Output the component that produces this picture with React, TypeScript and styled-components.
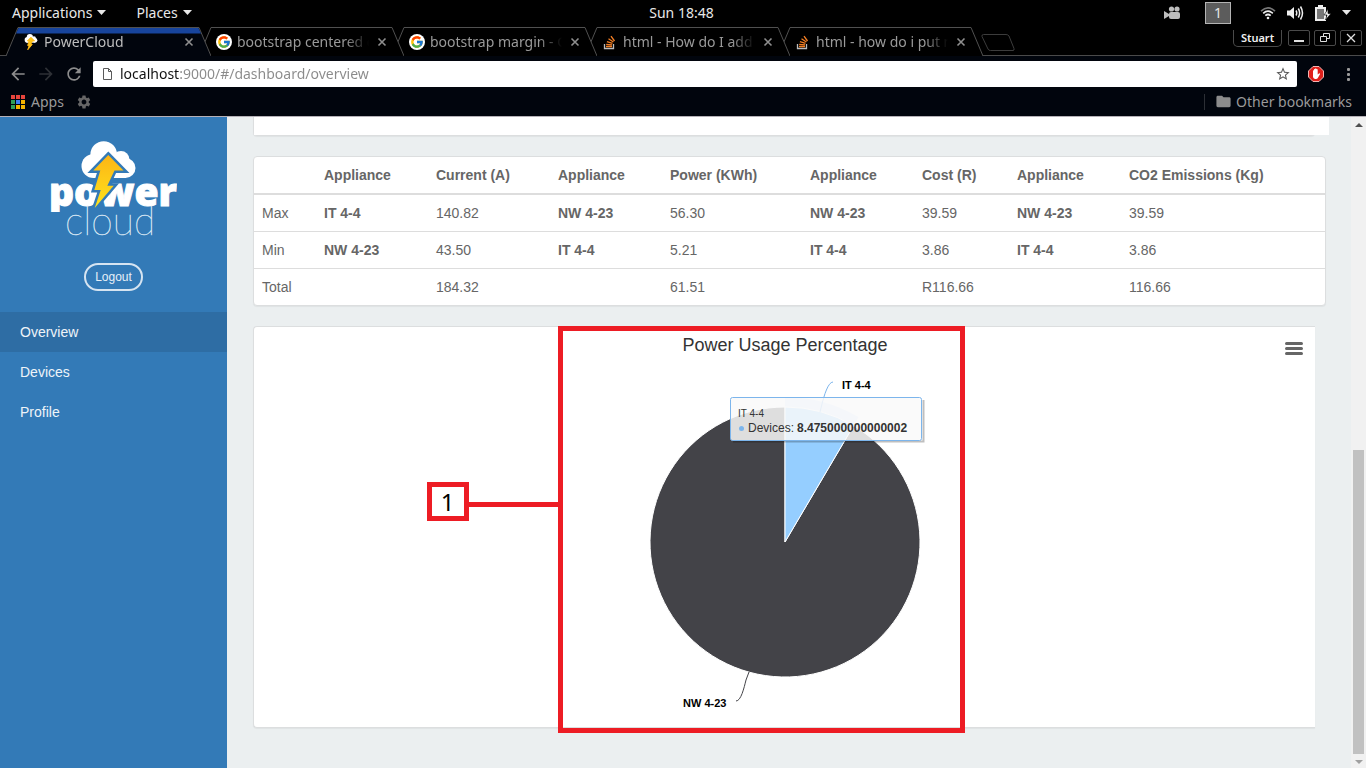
import React from 'react';
import styled, { createGlobalStyle } from 'styled-components';
import { FcGoogle } from 'react-icons/fc';
import { MdArrowBack, MdArrowForward, MdRefresh, MdStarBorder, MdFolder, MdSettings } from 'react-icons/md';

const GlobalStyle = createGlobalStyle`
  * { box-sizing: border-box; }
  body { margin: 0; background: #ebeff0; }
  button { font: inherit; padding: 0; margin: 0; border: 0; background: none; color: inherit; cursor: pointer; }
  svg { display: block; flex: none; }
`;

const ui = '"Noto Sans", "Open Sans", sans-serif';
const web = '"Liberation Sans", Arial, sans-serif';

const Screen = styled.div`
  display: flex;
  flex-direction: column;
  height: 100vh;
  overflow: hidden;
`;

/* Desktop bar */

const DesktopBar = styled.header`
  display: grid;
  grid-template-columns: 1fr auto 1fr;
  align-items: center;
  height: 27px;
  padding: 0 15px 2px 12px;
  background: #000;
  color: #e8e8e8;
  font: 14px/25px ${ui};
`;

const MenuGroup = styled.nav`
  display: flex;
  gap: 30px;
`;

const MenuButton = styled.button`
  display: flex;
  align-items: center;
  gap: 5px;
`;

const Status = styled.div`
  display: flex;
  align-items: center;
  justify-content: flex-end;
`;

const Workspace = styled.button`
  width: 26px;
  height: 22px;
  margin: 0 29px 0 23px;
  border: 1px solid #b4b4b4;
  background: #5c5c5c;
  line-height: 20px;
`;

const StatusIcons = styled.div`
  display: flex;
  align-items: center;
  gap: 11px;
`;

/* Browser chrome */

const TabStrip = styled.div`
  display: flex;
  height: 29px;
  padding: 0 4px 0 6px;
  background: #000;
  box-shadow: inset 0 -1px #4a4a4a;
  font: 14px/28px ${ui};
`;

const TabItem = styled.div<{ $level: number; $active?: boolean }>`
  position: relative;
  z-index: ${p => p.$level};
  display: flex;
  align-items: center;
  flex: none;
  width: 205px;
  padding: 0 17px 0 17px;
  color: ${p => (p.$active ? '#bdbdbd' : '#9a9a9a')};
  & + & { margin-left: -12px; }
`;

const TabShape = styled.svg`
  position: absolute;
  inset: 0;
  z-index: -1;
`;

const TabTitle = styled.button`
  flex: 1;
  min-width: 0;
  margin: 0 4px 0 5px;
  overflow: hidden;
  text-align: left;
  white-space: nowrap;
  mask-image: linear-gradient(to right, #000 80%, transparent 97%);
`;

const NewTab = styled.button`
  margin: 6px 0 0 -3px;
  height: 19px;
`;

const WindowControls = styled.div`
  display: flex;
  gap: 4px;
  margin-left: auto;
  padding-top: 3px;
`;

const UserTag = styled.button`
  width: 49px;
  height: 17px;
  margin-right: 2px;
  border: 1px solid #4a4a4a;
  border-top: 0;
  border-radius: 0 0 5px 5px;
  color: #f0f0f0;
  font: 600 11px/14px ${ui};
`;

const WindowButton = styled.button`
  display: grid;
  place-items: center;
  width: 22px;
  height: 16px;
  border: 1px solid #4a4a4a;
  border-radius: 2px;
  color: #e0e0e0;
`;

const Toolbar = styled.div`
  display: flex;
  align-items: center;
  height: 32px;
  padding: 5px 10px 1px 8px;
  background: #01050d;
`;

const NavButton = styled.button<{ $dim?: boolean }>`
  width: 20px;
  margin-right: 8px;
  color: ${p => (p.$dim ? '#2e3136' : '#8c8c8c')};
`;

const AddressBar = styled.label`
  display: flex;
  align-items: center;
  flex: 1;
  height: 26px;
  margin-left: 1px;
  padding: 0 6px 0 10px;
  border-radius: 2px;
  background: #fff;
  color: #5a5a5a;
`;

const AddressInput = styled.input`
  flex: 1;
  min-width: 0;
  margin-left: 8px;
  padding: 0;
  border: 0;
  outline: 0;
  background: linear-gradient(to right, #111 60px, #8a8a8a 60px);
  background-clip: text;
  color: transparent;
  font: 14px/22px ${ui};
`;

const Extension = styled.button`
  margin: 0 18px 0 11px;
`;

const Bookmarks = styled.nav`
  display: flex;
  align-items: center;
  height: 29px;
  padding: 0 14px 1px 11px;
  border-bottom: 1px solid #b5b1b7;
  background: #01050d;
  color: #9a9a9a;
  font: 14px/26px ${ui};
`;

const BookmarkButton = styled.button`
  display: flex;
  align-items: center;
  gap: 6px;
  margin-right: 12px;
`;

const OtherBookmarks = styled(BookmarkButton)`
  gap: 4px;
  height: 16px;
  margin: 0 0 0 auto;
  padding-left: 10px;
  border-left: 1px solid #2c2f35;
`;

/* Dashboard */

const Page = styled.div`
  display: flex;
  flex: 1;
  min-height: 0;
  background: #ebeff0;
  font: 14px/20px ${web};
`;

const Sidebar = styled.aside`
  display: flex;
  flex-direction: column;
  align-items: center;
  flex: none;
  width: 227px;
  padding-top: 24px;
  background: #337ab7;
  color: #fff;
`;

const Logout = styled.button`
  min-width: 59px;
  height: 28px;
  margin: 26px 0 21px;
  border: 2px solid #d6e4f1;
  border-radius: 14px;
  color: #e6eff7;
  font-size: 12px;
`;

const SideNav = styled.nav`
  align-self: stretch;
`;

const SideLink = styled.a<{ $active?: boolean }>`
  display: block;
  padding: 10px 20px;
  background: ${p => (p.$active ? '#2e6da4' : 'transparent')};
  color: #eef4f9;
  text-decoration: none;
`;

const Main = styled.main`
  flex: 1;
  min-width: 0;
  padding: 0 22px 0 26px;
  color: #666;
`;

const Card = styled.section<{ $inset: number }>`
  position: relative;
  margin: 0 ${p => p.$inset}px 20px 0;
  border: 1px solid #dcdedf;
  border-radius: 4px;
  background: #fff;
  box-shadow: 0 1px 1px rgba(0, 0, 0, 0.05);
`;

const CardTail = styled(Card)`
  border-top: 0;
  border-right: 0;
  border-radius: 0 0 4px 4px;
`;

const Overflow = styled.div`
  height: 18px;
  margin-right: -14px;
  background: #fff;
`;

const ChartCard = styled(Card)`
  display: flex;
  justify-content: center;
  border-right: 0;
  border-radius: 4px 0 0 4px;
`;

const Table = styled.table`
  width: 100%;
  table-layout: fixed;
  border-spacing: 0;
  text-align: left;
`;

const Col = styled.col<{ $w?: number }>`
  width: ${p => (p.$w ? p.$w + 'px' : 'auto')};
`;

const Th = styled.th`
  padding: 8px;
  border-bottom: 2px solid #ddd;
  white-space: nowrap;
`;

const Td = styled.td<{ $strong?: boolean }>`
  padding: 8px;
  font-weight: ${p => (p.$strong ? 700 : 400)};
  tr + tr > & { border-top: 1px solid #ddd; }
`;

const ChartMenu = styled.button`
  position: absolute;
  top: 15px;
  right: 12px;
`;

const Callout = styled.div`
  position: absolute;
  top: -1px;
  left: calc(50% - 227px);
  width: 407px;
  height: 407px;
  border: 5px solid #ed1c24;
  pointer-events: none;
`;

const CalloutLine = styled.div`
  position: absolute;
  top: 171px;
  right: 100%;
  width: 96px;
  height: 5px;
  background: #ed1c24;
`;

const CalloutNumber = styled.div`
  position: absolute;
  top: 151px;
  left: -136px;
  width: 42px;
  height: 39px;
  border: 5px solid #ed1c24;
  background: #fff;
  color: #000;
  font: 24px/30px ${ui};
  text-align: center;
`;

const Scrollbar = styled.div`
  display: flex;
  flex-direction: column;
  align-items: center;
  flex: none;
  width: 15px;
  padding: 6px 0 4px;
  background: #f1f1f1;
`;

const Track = styled.div`
  flex: 1;
`;

const Thumb = styled.div`
  width: 11px;
  height: 304px;
  margin-bottom: 6px;
  background: #c1c1c1;
`;

const Caret = () => (
  <svg width="9" height="5"><path d="M0 0H9L4.500 5Z" fill="currentColor" /></svg>
);

const bolt = 'M108.300 155 L123.500 170.500 H114.500 L107.300 185.700 H113.700 L94.700 208 L100.700 190 H94.300 L100.300 170.500 H93.300 Z';

const Cloud = ({ fill = '#fff' }: { fill?: string }) => (
  <g fill={fill}>
    <circle cx="103.700" cy="154.500" r="13.300" />
    <circle cx="93.500" cy="166" r="12" />
    <circle cx="121" cy="159.500" r="8.500" />
    <circle cx="125.500" cy="168" r="10" />
    <rect x="93" y="160" width="33" height="18" />
  </g>
);

const Logo = () => (
  <svg width="127" height="96" viewBox="50 141 127 96" role="img" aria-label="power cloud">
    <defs>
      <linearGradient id="boltFill" x1="0" y1="0" x2="0" y2="1">
        <stop offset="0" stopColor="#fdb515" />
        <stop offset="1" stopColor="#fde31c" />
      </linearGradient>
      <clipPath id="wordClip"><rect x="50" y="170" width="127" height="42" /></clipPath>
    </defs>
    <Cloud />
    <g clipPath="url(#wordClip)">
      <text x="49" y="206" fill="#fff" stroke="#fff" strokeWidth="1" fontFamily="Open Sans" fontWeight="800" fontSize="39">power</text>
    </g>
    <text x="65" y="235" fill="#dbe8f4" stroke="#dbe8f4" strokeWidth=".4" fontFamily="Lato" fontWeight="100" fontSize="39">cloud</text>
    <path d={bolt} fill="#337ab7" stroke="#337ab7" strokeWidth="5" />
    <path d={bolt} fill="url(#boltFill)" />
  </svg>
);

const CloudIcon = () => (
  <svg width="14" height="16" viewBox="80 141 57 68">
    <Cloud />
    <path d={bolt} fill="#fdc61a" stroke="#fdb515" strokeWidth="4" />
  </svg>
);

const GoogleIcon = () => (
  <svg width="16" height="16" viewBox="0 0 16 16">
    <circle cx="8" cy="8" r="8" fill="#fff" />
    <FcGoogle x="1" y="1" width="14" height="14" />
  </svg>
);

const StackIcon = () => (
  <svg width="14" height="16" viewBox="0 0 14 16" fill="none">
    <path d="M1.500 10V14.500H10.500V10" stroke="#bcbbbb" strokeWidth="1.300" />
    <path d="M3 12.500H9M3.200 10.300L9 10.900M3.900 7.600L9.500 9.300M5.500 4.800L10.400 8M8 2.200L11.500 7" stroke="#f47f24" strokeWidth="1.300" />
  </svg>
);

const CloseIcon = () => (
  <svg width="10" height="10" viewBox="0 0 10 10"><path d="M1.500 1.500L8.500 8.500M8.500 1.500L1.500 8.500" stroke="#8f8f8f" strokeWidth="1.600" /></svg>
);

type TabData = { title: string; icon: React.ReactNode; active?: boolean };

const tabs: TabData[] = [
  { title: 'PowerCloud', icon: <CloudIcon />, active: true },
  { title: 'bootstrap centered d', icon: <GoogleIcon /> },
  { title: 'bootstrap margin - Go', icon: <GoogleIcon /> },
  { title: 'html - How do I add a', icon: <StackIcon /> },
  { title: 'html - how do i put m', icon: <StackIcon /> },
];

const IconSlot = styled.span`
  display: grid;
  place-items: center;
  width: 16px;
`;

const Tab = ({ data, level }: { data: TabData; level: number }) => (
  <TabItem $level={level} $active={data.active}>
    <TabShape width="205" height="29" viewBox="0 0 205 29">
      <path d="M0 29L12 .5H193L205 29" fill={data.active ? '#01050d' : '#000'} stroke="#505050" />
      {data.active && <path d="M10 6.500L12.500 1H192.500L195 6.500Z" fill="#17449c" />}
    </TabShape>
    <IconSlot>{data.icon}</IconSlot>
    <TabTitle>{data.title}</TabTitle>
    <button aria-label="Close tab"><CloseIcon /></button>
  </TabItem>
);

const appColors = ['#e8453c', '#e8453c', '#e8453c', '#2f9e57', '#3a7df0', '#f5b400', '#2f9e57', '#f5b400', '#f5b400'];

const AppsIcon = () => (
  <svg width="14" height="14">
    {appColors.map((c, i) => <rect key={i} x={(i % 3) * 5} y={Math.floor(i / 3) * 5} width="4" height="4" fill={c} />)}
  </svg>
);

const StatusGlyphs = () => (
  <StatusIcons>
    <svg width="16" height="14" viewBox="0 0 16 14" fill="none" stroke="#eee">
      <path d="M1 5.200Q8 -1.500 15 5.200" stroke="#777" strokeWidth="1.600" />
      <path d="M3.200 7.400Q8 3 12.800 7.400M5.300 9.700Q8 7.300 10.700 9.700" strokeWidth="1.700" />
      <circle cx="8" cy="12" r="1.300" fill="#eee" stroke="none" />
    </svg>
    <svg width="17" height="16" viewBox="0 0 17 16" fill="none" stroke="#eee" strokeWidth="1.500">
      <path d="M0 5.500H3L7 2V14L3 10.500H0Z" fill="#eee" stroke="none" />
      <path d="M9 5.500Q10.500 8 9 10.500M11.300 3.500Q14 8 11.300 12.500M13.500 1.500Q17.500 8 13.500 14.500" />
    </svg>
    <svg width="16" height="16" viewBox="0 0 16 16">
      <path d="M3 0H8V2H11V16H0V2H3Z" fill="#eee" />
      <rect x="2" y="4" width="7" height="10" fill="#777" />
      <path d="M13 4L9 10H12L10.500 15L16 8.500H13Z" fill="#eee" stroke="#000" strokeWidth=".6" />
    </svg>
    <Caret />
  </StatusIcons>
);

const headings = ['', 'Appliance', 'Current (A)', 'Appliance', 'Power (KWh)', 'Appliance', 'Cost (R)', 'Appliance', 'CO2 Emissions (Kg)'];
const widths = [62, 112, 122, 112, 140, 112, 95, 112, undefined];
const rows = [
  ['Max', 'IT 4-4', '140.82', 'NW 4-23', '56.30', 'NW 4-23', '39.59', 'NW 4-23', '39.59'],
  ['Min', 'NW 4-23', '43.50', 'IT 4-4', '5.21', 'IT 4-4', '3.86', 'IT 4-4', '3.86'],
  ['Total', '', '184.32', '', '61.51', '', 'R116.66', '', '116.66'],
];

const share = 8.475;
const cx = 301;
const cy = 215;
const rim = (r: number) => {
  const a = (share / 100) * Math.PI * 2;
  return `${cx + r * Math.sin(a)} ${cy - r * Math.cos(a)}`;
};

const PieChart = () => (
  <svg width="601" height="400" viewBox="0 0 601 400" fontFamily="Liberation Sans, Arial, sans-serif" role="img" aria-label="Power Usage Percentage">
    <text x={cx} y="24" textAnchor="middle" fontSize="18" fill="#333">Power Usage Percentage</text>
    <path d={`M${cx} ${cy}V${cy - 145}A145 145 0 0 1 ${rim(145)}Z`} fill="#7cb5ec" opacity=".25" />
    <path d={`M${cx} ${cy}L${rim(135)}A135 135 0 1 1 ${cx} ${cy - 135}Z`} fill="#434348" stroke="#fff" />
    <path d={`M${cx} ${cy}V${cy - 135}A135 135 0 0 1 ${rim(135)}Z`} fill="#95ceff" stroke="#fff" />
    <path d="M349 55C344 55 340 69 338 77L336 85" fill="none" stroke="#7cb5ec" />
    <path d="M252 374C257 374 260 361 262 353L265 345" fill="none" stroke="#434348" />
    <g fontSize="11" fontWeight="700" fill="#000">
      <text x="358" y="62">IT 4-4</text>
      <text x="199" y="380">NW 4-23</text>
    </g>
    <path d="M439.500 73V114.500H249" fill="none" stroke="#000" strokeWidth="2" opacity=".25" />
    <rect x="246.500" y="70.500" width="191" height="43" rx="2" fill="#f9f9f9" fillOpacity=".85" stroke="#7cb5ec" />
    <g fill="#333">
      <text x="254" y="90" fontSize="10">IT 4-4</text>
      <circle cx="257.500" cy="101.500" r="2.500" fill="#7cb5ec" />
      <text x="264" y="105" fontSize="12">Devices: <tspan x="313" fontWeight="700">8.475000000000002</tspan></text>
    </g>
  </svg>
);

export default function App() {
  return (
    <Screen>
      <GlobalStyle />
      <DesktopBar>
        <MenuGroup>
          <MenuButton>Applications <Caret /></MenuButton>
          <MenuButton>Places <Caret /></MenuButton>
        </MenuGroup>
        <span>Sun 18:48</span>
        <Status>
          <svg width="18" height="14" viewBox="0 0 18 14" fill="#bdbdbd">
            <circle cx="7.500" cy="3" r="2.600" /><circle cx="13" cy="3" r="2.600" />
            <rect x="5" y="6" width="11" height="7" rx="2" /><path d="M0 5L5 8V10L0 13Z" />
          </svg>
          <Workspace>1</Workspace>
          <StatusGlyphs />
        </Status>
      </DesktopBar>

      <TabStrip>
        {tabs.map((t, i) => <Tab key={t.title} data={t} level={tabs.length - i} />)}
        <NewTab aria-label="New tab">
          <svg width="36" height="19"><path d="M3.500 1.500H26Q28 1.500 29 3L34 15.500Q34.500 17.500 33 17.500H10.500Q8.500 17.500 8 16L2 3.500Q1.500 1.500 3.500 1.500Z" fill="none" stroke="#3c3c3c" /></svg>
        </NewTab>
        <WindowControls>
          <UserTag>Stuart</UserTag>
          <WindowButton aria-label="Minimise"><svg width="10" height="10"><path d="M0 8H10" stroke="currentColor" strokeWidth="2" /></svg></WindowButton>
          <WindowButton aria-label="Restore"><svg width="10" height="10" fill="none" stroke="currentColor"><path d="M3.500 3.500V.5H9.500V5.500H6.500M.5 3.500H6.500V8.500H.5Z" /></svg></WindowButton>
          <WindowButton aria-label="Close"><svg width="10" height="10"><path d="M1 1L9 9M9 1L1 9" stroke="currentColor" strokeWidth="1.300" /></svg></WindowButton>
        </WindowControls>
      </TabStrip>

      <Toolbar>
        <NavButton aria-label="Back"><MdArrowBack size={20} /></NavButton>
        <NavButton aria-label="Forward" $dim><MdArrowForward size={20} /></NavButton>
        <NavButton aria-label="Reload"><MdRefresh size={20} /></NavButton>
        <AddressBar>
          <svg width="9" height="12" fill="none" stroke="currentColor"><path d="M.5 .5H5.500L8.500 3.500V11.500H.5ZM5.500 .5V3.500H8.500" /></svg>
          <AddressInput aria-label="Address" defaultValue="localhost:9000/#/dashboard/overview" />
          <MdStarBorder size={16} />
        </AddressBar>
        <Extension aria-label="Ad blocker">
          <svg width="16" height="16" viewBox="0 0 16 16">
            <path d="M5 .5H11L15.500 5V11L11 15.500H5L.5 11V5Z" fill="#e0201b" stroke="#f3b5b2" />
            <path d="M5 8V4.500Q5.500 4 6 4.500V3.300Q6.600 2.700 7.200 3.300V2.700Q7.800 2 8.400 2.700V3.300Q9.200 2.800 9.700 3.600V8.500L11.300 7.300Q12.300 7.300 12 8.200L9.800 12Q9.300 13 8 13H7Q5.300 12.700 5 11Z" fill="#fff" />
          </svg>
        </Extension>
        <button aria-label="Menu"><svg width="14" height="14" fill="#9a9a9a"><rect x="5" y="1" width="3" height="3" rx="1" /><rect x="5" y="6" width="3" height="3" rx="1" /><rect x="5" y="11" width="3" height="3" rx="1" /></svg></button>
      </Toolbar>

      <Bookmarks>
        <BookmarkButton><AppsIcon />Apps</BookmarkButton>
        <BookmarkButton aria-label="Settings"><MdSettings size={16} color="#666" /></BookmarkButton>
        <OtherBookmarks><MdFolder size={17} color="#8c8c8c" />Other bookmarks</OtherBookmarks>
      </Bookmarks>

      <Page>
        <Sidebar>
          <Logo />
          <Logout>Logout</Logout>
          <SideNav>
            <SideLink href="#/dashboard/overview" $active>Overview</SideLink>
            <SideLink href="#/dashboard/devices">Devices</SideLink>
            <SideLink href="#/dashboard/profile">Profile</SideLink>
          </SideNav>
        </Sidebar>

        <Main>
          <CardTail $inset={14}><Overflow /></CardTail>
          <Card $inset={3}>
            <Table>
              <colgroup>{widths.map((w, i) => <Col key={i} $w={w} />)}</colgroup>
              <thead><tr>{headings.map((h, i) => <Th key={i}>{h}</Th>)}</tr></thead>
              <tbody>
                {rows.map(r => (
                  <tr key={r[0]}>{r.map((c, i) => <Td key={i} $strong={i % 2 === 1}>{c}</Td>)}</tr>
                ))}
              </tbody>
            </Table>
          </Card>
          <ChartCard $inset={14}>
            <PieChart />
            <ChartMenu aria-label="Chart menu">
              <svg width="18" height="13"><path d="M1.500 1.500H16.500M1.500 6.500H16.500M1.500 11.500H16.500" stroke="#666" strokeWidth="3" strokeLinecap="round" /></svg>
            </ChartMenu>
            <Callout>
              <CalloutLine />
              <CalloutNumber>1</CalloutNumber>
            </Callout>
          </ChartCard>
        </Main>

        <Scrollbar aria-hidden="true">
          <svg width="8" height="4"><path d="M0 4L4 0L8 4Z" fill="#505050" /></svg>
          <Track />
          <Thumb />
          <svg width="8" height="4"><path d="M0 0H8L4 4Z" fill="#a0a0a0" /></svg>
        </Scrollbar>
      </Page>
    </Screen>
  );
}
